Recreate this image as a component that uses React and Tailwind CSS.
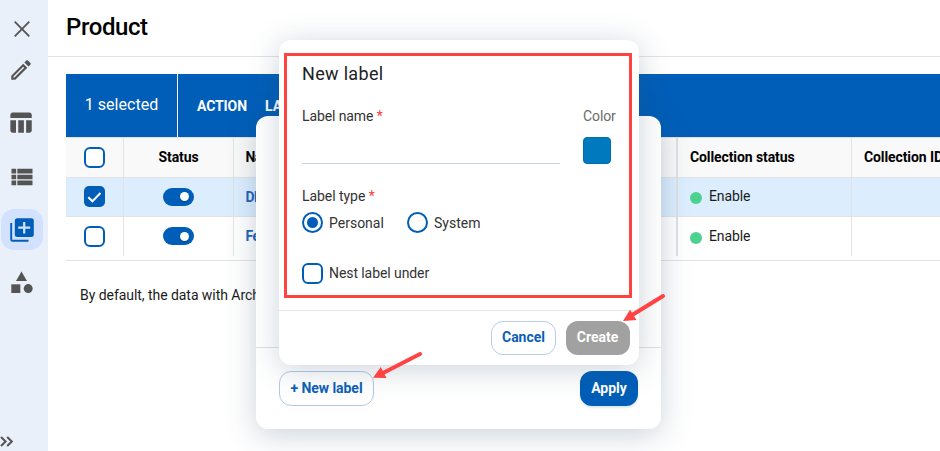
import React from "react";
import { MdTableChart, MdViewList, MdOutlineEdit } from "react-icons/md";

function Sidebar() {
  return (
    <aside className="flex w-12 shrink-0 flex-col bg-[#e9f0fa] text-[#545454]">
      <div className="flex h-[451px] w-[43px] flex-col items-center pt-[21px]">
        <svg className="h-4 w-4 shrink-0" viewBox="0 0 16 16" fill="none" stroke="currentColor" strokeWidth="1.8">
          <path d="M0.7 0.7 15.3 15.3M15.3 0.7 0.7 15.3" />
        </svg>
        <MdOutlineEdit className="mt-[20px] mr-px h-[26px] w-[26px] shrink-0" />
        <MdTableChart className="mt-[26px] mr-[2px] h-[27px] w-[27px] shrink-0" />
        <MdViewList className="mt-[27px] h-[28px] w-[28px] shrink-0" />
        <div className="mt-[18px] ml-px flex h-[41px] w-[42px] shrink-0 items-center justify-center rounded-[13px] bg-[#d2e2fe] text-[#005eb8]">
          <svg className="h-[24px] w-[24px]" viewBox="0 0 24 24" fill="none">
            <rect x="4.8" y="0.3" width="19" height="18.600" rx="2.5" fill="currentColor" />
            <path d="M14.200 4v11.500M8.200 9.700h12" stroke="#d2e2fe" strokeWidth="2.200" />
            <path d="M1.200 5V21.500Q1.200 22.800 2.500 22.800H18.500" stroke="currentColor" strokeWidth="1.900" />
          </svg>
        </div>
        <svg className="mt-[21px] ml-px h-[22px] w-[22px] shrink-0" viewBox="0 0 22 22" fill="currentColor">
          <path d="M10.5 0.500 16 10H5z" />
          <rect x="0.3" y="13.300" width="9" height="8.700" />
          <circle cx="17.2" cy="17.6" r="4.5" />
        </svg>
        <svg className="mt-[143px] mr-auto h-[11px] w-[14px] shrink-0" viewBox="0 0 14 11" fill="none" stroke="currentColor" strokeWidth="2">
          <path d="M1 1 5.6 5.5 1 10M7.2 1 11.8 5.5 7.2 10" />
        </svg>
      </div>
    </aside>
  );
}

function Checkbox({ checked }) {
  return checked ? (
    <span className="mb-px flex h-[21px] w-[21px] shrink-0 items-center justify-center rounded-[5px] bg-[#005eb8]">
      <svg className="h-[21px] w-[21px]" viewBox="0 0 21 21" fill="none" stroke="white" strokeWidth="2">
        <path d="M4.3 11.2 8.4 15.3 16.5 7" />
      </svg>
    </span>
  ) : (
    <span className="h-[21px] w-[21px] shrink-0 rounded-[6px] border-2 border-[#005eb8] bg-white" />
  );
}

function Toggle() {
  return (
    <span className="flex h-[18px] w-[31px] items-center justify-end rounded-full bg-[#005eb8] pr-[5px]">
      <span className="h-[9px] w-[9px] rounded-full bg-white shadow-[0_1px_2px_rgba(0,0,0,0.3)]" />
    </span>
  );
}

const COLS = "grid grid-cols-[58px_110px_444px_174px_1fr]";

function Row({ checked, name, tone }) {
  return (
    <div className={`${COLS} ${tone}`}>
      <div className="flex items-center justify-center border-r border-[#e1e3e5]"><Checkbox checked={checked} /></div>
      <div className="flex items-center justify-center border-r border-[#e1e3e5] pb-px"><Toggle /></div>
      <div className="flex items-center border-r-2 border-[#dfe1e4] pb-px pl-[11.5px] font-bold tracking-[-0.5px] text-[#1c63b7]">{name}</div>
      <div className="flex items-center gap-[7px] border-r border-[#e1e3e5] pl-3">
        <span className="mt-[2px] h-3 w-3 rounded-full bg-[#4cd28e]" />
        <span className="pb-[2px] tracking-[-0.1px]">Enable</span>
      </div>
    </div>
  );
}

function ProductTable() {
  return (
    <div className="ml-[18px] mt-[17px] w-[874px] text-sm">
      <div className="flex h-[63px] items-center bg-[#005eb8] text-white">
        <div className="flex h-full w-[112px] items-center justify-center border-r border-white pb-[2px] text-base tracking-[0.05px]">1 selected</div>
        <span className="ml-[19px] w-[68px] font-bold tracking-[-0.1px]">ACTION</span>
        <span className="font-bold">LABEL</span>
      </div>
      <div className={`${COLS} h-[41px] border-y border-[#e1e3e5] bg-[#f9f9f9] font-bold tracking-[-0.1px] text-black`}>
        <div className="flex items-center justify-center border-r border-[#e1e3e5]"><Checkbox /></div>
        <div className="flex items-center justify-center border-r border-[#e1e3e5] pb-[2px]">Status</div>
        <div className="flex items-center border-r-2 border-[#dfe1e4] pb-[2px] pl-[11.5px] tracking-[-0.6px]">Name</div>
        <div className="flex items-center border-r border-[#e1e3e5] pb-[2px] pl-3">Collection status</div>
        <div className="flex items-center whitespace-nowrap pb-[2px] pl-3">Collection ID</div>
      </div>
      <Row checked name="DEMO" tone="h-[39px] border-b border-[#e1e3e5] bg-[#dceefe]" />
      <div className="h-[44px] border-b border-[#e1e3e5]">
        <Row name="Featured" tone="h-[39px]" />
      </div>
      <p className="ml-[14px] mt-[24px] leading-5 tracking-[-0.05px]">By default, the data with Archived status is hidden.</p>
    </div>
  );
}

function LabelsDialog() {
  return (
    <section className="absolute left-[256px] top-[116px] flex h-[313px] w-[405px] flex-col rounded-xl bg-white shadow-[0_6px_30px_rgba(50,80,110,0.25)]">
      <div className="h-[231px]" />
      <footer className="flex flex-1 items-start justify-between border-t border-[#dfe1e5] pl-[23px] pr-[23px] pt-[23px] text-sm font-bold">
        <button className="h-[35px] w-[95px] rounded-xl border border-[#b3c9e4] bg-white pb-[2px] tracking-[-0.05px] text-[#0b60b8]">+ New label</button>
        <button className="h-[35px] w-[58px] rounded-xl bg-[#005eb8] pb-[2px] text-white shadow-[0_2px_2px_rgba(0,110,190,0.15)]">Apply</button>
      </footer>
    </section>
  );
}

function Required() {
  return <span className="text-[#fb3b3b]">*</span>;
}

function NewLabelDialog() {
  return (
    <section className="absolute left-[279px] top-[40px] flex h-[325px] w-[360px] flex-col rounded-xl bg-white text-sm text-[#333] shadow-[0_4px_30px_rgba(50,80,110,0.25)]">
      <div className="ml-[5px] mt-[13px] h-[245px] w-[348px] border-[3px] border-[#ff4242] pl-[15px] pt-[6px]">
        <h2 className="text-lg leading-6 tracking-[0.32px] text-[#202124]">New label</h2>
        <div className="mt-[20px] flex gap-[23px]">
          <div className="h-[58px] w-[258px] border-b border-[#c2d5ea]">
            <label className="block leading-5 tracking-[-0.1px]">Label name <Required /></label>
          </div>
          <div>
            <div className="leading-5 tracking-[-0.1px] text-[#6b6b6b]">Color</div>
            <div className="mt-[11px] h-[27px] w-[28px] rounded-[4px] border border-[#006eb0] bg-[#0079bf]" />
          </div>
        </div>
        <div className="mt-[22px] leading-5 tracking-[-0.05px]">Label type <Required /></div>
        <div className="mt-[6px] flex items-center">
          <span className="flex h-[21px] w-[21px] items-center justify-center rounded-full border-2 border-[#005eb8]">
            <span className="h-[11px] w-[11px] rounded-full bg-[#005eb8]" />
          </span>
          <span className="ml-[6px] w-[78px]">Personal</span>
          <span className="h-[21px] w-[21px] rounded-full border-2 border-[#005eb8]" />
          <span className="ml-[6px]">System</span>
        </div>
        <div className="mt-[30px] flex items-center gap-[6px]">
          <Checkbox />
          <span className="pb-px tracking-[-0.08px]">Nest label under</span>
        </div>
      </div>
      <footer className="mt-[12px] flex flex-1 items-start justify-end gap-[10px] border-t border-[#e5e7e9] pr-[9px] pt-[10px] font-bold">
        <button className="h-[34px] w-[65px] rounded-xl border border-[#b9cee9] pb-[2px] text-[#0b60b8]">Cancel</button>
        <button className="h-[34px] w-[64px] rounded-xl bg-[#a1a1a1] pb-[2px] pr-px text-white">Create</button>
      </footer>
    </section>
  );
}

export default function App() {
  return (
    <div className="relative flex h-[451px] w-[940px] overflow-hidden bg-white font-['Roboto','Liberation_Sans',sans-serif] text-[#1b1b1b]">
      <Sidebar />
      <main className="min-w-0 flex-1">
        <header className="flex h-[57px] items-center border-b border-[#e1e3e5] pb-[2px] pl-[18px]">
          <h1 className="text-2xl font-medium leading-7 tracking-[-0.4px] text-black">Product</h1>
        </header>
        <ProductTable />
      </main>
      <LabelsDialog />
      <NewLabelDialog />
      <svg className="pointer-events-none absolute left-[370px] top-[290px] h-[92px] w-[300px]" viewBox="370 290 300 92" fill="#ff4242" stroke="#ff4242" strokeLinecap="round">
        <path d="M420 354 383 373" strokeWidth="4" />
        <path d="M373 377.800 380.800 367 386.500 378z" stroke="none" />
        <path d="M663 296 633 314.500" strokeWidth="4" />
        <path d="M623 321 630 309.800 636.500 320z" stroke="none" />
      </svg>
    </div>
  );
}
